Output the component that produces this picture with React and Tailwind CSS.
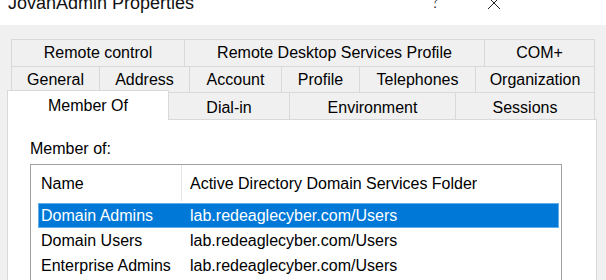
const rowOne = [
  { label: "Remote control", w: "w-[173px]" },
  { label: "Remote Desktop Services Profile", w: "w-[300px]" },
  { label: "COM+", w: "w-[111px]" },
];

const rowTwo = [
  { label: "General", w: "w-[88px]" },
  { label: "Address", w: "w-[90px]" },
  { label: "Account", w: "w-[92px]" },
  { label: "Profile", w: "w-[78px]" },
  { label: "Telephones", w: "w-[116px]" },
  { label: "Organization", w: "w-[120px]" },
];

const rowThree = [
  { label: "Dial-in", w: "w-[120px]" },
  { label: "Environment", w: "w-[166px]" },
  { label: "Sessions", w: "w-[140px]" },
];

const groups = [
  { name: "Domain Admins", folder: "lab.redeaglecyber.com/Users", selected: true },
  { name: "Domain Users", folder: "lab.redeaglecyber.com/Users" },
  { name: "Enterprise Admins", folder: "lab.redeaglecyber.com/Users" },
];

const Tab = ({ label, w, h, last }) => (
  <div
    className={`${w} ${h} flex items-center justify-center border-t border-l border-[#d9d9d9] bg-[#f0f0f0] ${
      last ? "border-r" : ""
    }`}
  >
    {label}
  </div>
);

const App = () => {
  return (
    <div className="w-[606px] h-[280px] overflow-hidden bg-[#f0f0f0] flex flex-col text-[16px] leading-[18px] text-black font-['Liberation_Sans',Arial,sans-serif]">
      {/* title bar */}
      <div className="h-[25px] shrink-0 bg-white flex items-start overflow-hidden">
        <div className="ml-[8px] -mt-[6px] text-[18px] leading-[18px] text-[#111]">
          JovanAdmin Properties
        </div>
        <div className="ml-auto mr-[48px] -mt-[7px] text-[17px] leading-[18px] font-light font-['Lato',sans-serif] text-[#222]">
          ?
        </div>
        <svg width="14" height="14" viewBox="0 0 14 14" className="-mt-[4px] mr-[105px]">
          <path d="M1 1 L13 13 M13 1 L1 13" stroke="#222" strokeWidth="1" fill="none" />
        </svg>
      </div>

      {/* tabs */}
      <div className="mt-[14px] flex flex-col">
        <div className="flex ml-[11px]">
          {rowOne.map((t, i) => (
            <Tab key={t.label} {...t} h="h-[27px]" last={i === rowOne.length - 1} />
          ))}
        </div>
        <div className="flex ml-[11px]">
          {rowTwo.map((t, i) => (
            <Tab key={t.label} {...t} h="h-[26px]" last={i === rowTwo.length - 1} />
          ))}
        </div>
        <div className="flex items-end ml-[7px] -mt-[2px] h-[29px]">
          <div className="relative z-10 w-[162px] h-[30px] -mb-px bg-white border-t border-l border-r border-[#d9d9d9] flex items-start justify-center pt-[6px]">
            Member Of
          </div>
          {rowThree.map((t, i) => (
            <div
              key={t.label}
              className={`${t.w} h-[27px] flex items-center justify-center pt-[3px] border-t border-[#d9d9d9] ${
                i > 0 ? "border-l" : ""
              } ${i === rowThree.length - 1 ? "border-r" : ""}`}
            >
              {t.label}
            </div>
          ))}
        </div>
      </div>

      {/* panel */}
      <div className="ml-[7px] w-[590px] flex-1 bg-white border border-[#d9d9d9] pt-[20px] pl-[22px]">
        <div>Member of:</div>
        <div className="mt-[6px] w-[532px] h-[200px] border border-[#a0a0a0] bg-white">
          <div className="flex h-[38px]">
            <div className="w-[150px] pl-[10px] flex items-center">Name</div>
            <div className="w-px h-[36px] bg-[#e5e5e5]" />
            <div className="pl-[8px] flex items-center">Active Directory Domain Services Folder</div>
          </div>
          <div className="ml-[7px] w-[521px]">
            {groups.map((g) => (
              <div
                key={g.name}
                className={`flex h-[25px] items-center ${
                  g.selected ? "bg-[#0078d7] text-white border border-[#62aeea]" : "border border-transparent"
                }`}
              >
                <div className="w-[151px] pl-[2px]">{g.name}</div>
                <div>{g.folder}</div>
              </div>
            ))}
          </div>
        </div>
      </div>
    </div>
  );
};

export default App;
